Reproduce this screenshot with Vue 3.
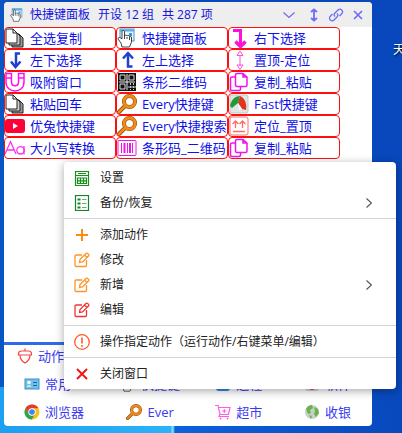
<template>
  <div class="desktop">
    <!-- Shared icon shapes -->
    <svg class="sprite" aria-hidden="true">
      <symbol id="i-hand" viewBox="0 0 20 20">
        <rect x="3" y="1" width="14" height="12" fill="#e8f4ff" stroke="#4a94c8" />
        <path d="M3 2.500h14" stroke="#58a9de" stroke-width="2" />
        <path d="M12 5h3v3h-3z" fill="#2c9cf0" />
        <path d="M13 9h2v2h-2z" fill="#f09a28" />
        <path d="M5 19l-1-4-3-4c0-2 2-2 4 0V4c0-2 2.500-2 2.500 0v4c1-1 2-1 2.500 0 1-1 2-.5 2.500.5 1-.5 2 0 2 1.500v4l-2 5z" fill="#fff" stroke="#111" stroke-width=".8" />
        <path d="M7.500 8v3M10 9v2M12.500 9v3" stroke="#111" stroke-width=".8" />
      </symbol>
      <symbol id="i-pages" viewBox="0 0 20 20">
        <path d="M7 6h7l4 4v9H7z" fill="#999" stroke="#222" />
        <path d="M4 4h7l4 4v9H4z" fill="#ccc" stroke="#222" />
        <path d="M1 1h7l4 4v10H1z" fill="#fff" stroke="#222" />
        <path d="M8 1v4h4" fill="none" stroke="#222" />
      </symbol>
      <symbol id="i-left-down" viewBox="0 0 20 20">
        <path d="M15 3.500h-4V16" fill="none" stroke="#1f3fd0" stroke-width="2.500" />
        <path d="M6 11.500l4.500 5.500 5-5.500" fill="none" stroke="#1f3fd0" stroke-width="2.500" />
      </symbol>
      <symbol id="i-left-up" viewBox="0 0 20 20">
        <path d="M15.500 16.500H11V4" fill="none" stroke="#1f3fd0" stroke-width="2.500" />
        <path d="M6 8.500L11 3l5 5.500" fill="none" stroke="#1f3fd0" stroke-width="2.500" />
      </symbol>
      <symbol id="i-right-down" viewBox="0 0 20 20">
        <path d="M4 2.500h7.500V16" fill="none" stroke="#ff10d8" stroke-width="3" />
        <path d="M6.500 13.500l5 5 5-5" fill="none" stroke="#ff10d8" stroke-width="3.500" />
      </symbol>
      <symbol id="i-updown" viewBox="0 0 20 20">
        <path d="M11 5v11M8 5.500L11 1l3 4.500zM8 15l3 4.500L14 15z" fill="#fff" stroke="#ff50dc" />
      </symbol>
      <symbol id="i-magnet" viewBox="0 0 20 20">
        <path d="M1 1.500h5.500V10c0 5 7 5 7 0V1.500H19V10c0 12-18 12-18 0zM1 6h5.500M13.500 6H19" fill="none" stroke="#ff10ee" stroke-width="1.500" />
      </symbol>
      <symbol id="i-qr" viewBox="0 0 20 20">
        <path d="M1 1h18v18H1z" fill="#111" />
        <path d="M3 3h5v5H3zM12 3h5v5h-5zM3 12h5v5H3z" fill="none" stroke="#ddd" />
        <path d="M10 2v16M2 10h16" stroke="#eee" />
        <path d="M13.500 11v7M16.500 11v7M11 15h8" stroke="#ccc" stroke-dasharray="2 1" />
      </symbol>
      <symbol id="i-copy" viewBox="0 0 20 20">
        <path d="M7 5H3q-1.500 0-1.500 1.500V17q0 1.500 1.500 1.500h7q1.500 0 1.500-1.500v-2M8 1.500h6L18 5v8q0 1.500-1.500 1.500H8q-1.500 0-1.500-1.500V3Q6.500 1.500 8 1.500zM14 1.500V5h4" fill="none" stroke="#f014e8" stroke-width="1.500" />
      </symbol>
      <symbol id="i-search" viewBox="0 0 20 20">
        <path d="M8 12l-6 6" stroke="#7a4208" stroke-width="4" stroke-linecap="round" />
        <circle cx="12.500" cy="7.500" r="5.500" fill="none" stroke="#8a4c0c" stroke-width="4" />
        <path d="M8 12l-6 6" stroke="#f58b16" stroke-width="2.500" stroke-linecap="round" />
        <circle cx="12.500" cy="7.500" r="5.500" fill="none" stroke="#f58b16" stroke-width="2.800" />
      </symbol>
      <symbol id="i-fast" viewBox="0 0 20 20">
        <rect x="1" y="1" width="18" height="18" rx="2" fill="#e2e5e2" stroke="#c4c8c4" />
        <path d="M1 12C2 6 6 2 11 2L9 9l-6 5z" fill="#1f9a3c" />
        <path d="M11 2c5 2 7 8 6 14l-4-1-4-6z" fill="#e0341c" />
        <path d="M9 9l4 6-3 1z" fill="#fff" />
      </symbol>
      <symbol id="i-youtube" viewBox="0 0 20 20">
        <rect y="3" width="20" height="14" rx="3" fill="#ff0038" />
        <path d="M8 7v6l5-3z" fill="#fff" />
      </symbol>
      <symbol id="i-top" viewBox="0 0 20 20">
        <rect x="1" y="1" width="18" height="18" rx="2" fill="#fff" stroke="#ff6a6a" />
        <path d="M6.500 12V5M3.500 8l3-3 3 3M13.500 12V5M10.500 8l3-3 3 3M4 15.500h12" fill="none" stroke="#ff6a6a" stroke-width="1.300" />
      </symbol>
      <symbol id="i-case" viewBox="0 0 20 20">
        <path d="M0 16L5.500 3.500 11 16M2 12h7M19 8v8.500" fill="none" stroke="#ff30ee" stroke-width="1.300" />
        <circle cx="15.500" cy="12.300" r="3.700" fill="none" stroke="#ff30ee" stroke-width="1.300" />
      </symbol>
      <symbol id="i-barcode" viewBox="0 0 20 20">
        <rect x="1" y="2.500" width="18" height="15" rx="1" fill="none" stroke="#f014e8" />
        <path d="M4.500 5v10M10.500 5v10M15.500 5v10" stroke="#f014e8" />
        <path d="M7.500 5v10M13 5v10" stroke="#f014e8" stroke-width="2" />
      </symbol>

      <symbol id="i-down" viewBox="0 0 16 16">
        <path d="M2.500 5.500L8 10.500l5.500-5" fill="none" stroke="#6c6cf8" stroke-width="1.200" />
      </symbol>
      <symbol id="i-resize" viewBox="0 0 16 16">
        <path d="M8 4v8M5 5l3-2.500L11 5M5 11l3 2.500 3-2.500" fill="none" stroke="#6c6cf8" stroke-width="1.800" />
      </symbol>
      <symbol id="i-link" viewBox="0 0 16 16">
        <path d="M7 9.500a2.500 2.500 0 0 1 0-3.500l3-3a2.600 2.600 0 0 1 3.700 3.700L11.500 9M9 6.500a2.500 2.500 0 0 1 0 3.500l-3 3a2.600 2.600 0 0 1-3.700-3.700L4.500 7" fill="none" stroke="#6c6cf8" stroke-width="1.300" />
      </symbol>
      <symbol id="i-close" viewBox="0 0 16 16">
        <path d="M4 4l8 8M12 4l-8 8" stroke="#6c6cf8" stroke-width="1.700" />
      </symbol>

      <symbol id="i-calc" viewBox="0 0 16 16">
        <path d="M1.500 1.500h13v14h-13zM1.500 5.500h13M3.500 8h9v5.500h-9zM3.500 10.800h9M6.500 8v5.500M9.500 8v5.500" fill="none" stroke="#169016" stroke-width="1.200" />
        <path d="M4 3.500h8" stroke="#169016" />
      </symbol>
      <symbol id="i-list" viewBox="0 0 16 16">
        <rect x="1.500" y=".5" width="13" height="15" fill="none" stroke="#12852a" stroke-width="1.200" />
        <path d="M3.500 4.500h3M3.500 8.500h3M3.500 12.500h3" stroke="#12852a" stroke-width="2" />
        <path d="M8 4.500h4.500M8 8.500h4.500M8 12.500h4.500" stroke="#6aae74" />
      </symbol>
      <symbol id="i-plus" viewBox="0 0 16 16">
        <path d="M8 2v12M2 8h12" stroke="#ff8a10" stroke-width="2" />
      </symbol>
      <symbol id="i-edit" viewBox="0 0 16 16">
        <path d="M8 3H2.200Q1 3 1 4.200v9.100q0 1.200 1.200 1.200h9.100q1.200 0 1.200-1.200V8M5.500 10.500l.5-3L12 1.500q.8-.8 1.600 0l.9.900q.8.800 0 1.600l-6 6zM10.500 3l2.500 2.500" fill="none" stroke="currentColor" stroke-width="1.300" />
      </symbol>
      <symbol id="i-alert" viewBox="0 0 16 16">
        <circle cx="8" cy="8" r="7.300" fill="none" stroke="#ff5a28" stroke-width="1.300" />
        <path d="M8 3.500v6M8 11v1.700" stroke="#ff5a28" stroke-width="1.600" />
      </symbol>
      <symbol id="i-cross" viewBox="0 0 16 16">
        <path d="M3 3l10 10M13 3L3 13" stroke="#f01414" stroke-width="1.900" />
      </symbol>

      <symbol id="i-acorn" viewBox="0 0 16 16">
        <path d="M1.500 6q0-3 3-3h7q3 0 3 3v1h-13zM3 7c0 4 2 6.500 5 8 3-1.500 5-4 5-8M8 3V.5" fill="none" stroke="#ff4040" stroke-width="1.200" />
      </symbol>
      <symbol id="i-card" viewBox="0 0 16 16">
        <rect x="1" y="3" width="14" height="10" fill="#6cc0ee" stroke="#3d92cc" />
        <circle cx="5" cy="6.500" r="1.800" fill="#fff" />
        <path d="M2.500 11q2.500-4 5 0z" fill="#f6e4b0" />
        <path d="M9 6.500h4M9 9.500h4" stroke="#235f98" />
      </symbol>
      <symbol id="i-chrome" viewBox="0 0 16 16">
        <circle cx="8" cy="8" r="7.500" fill="#fbc116" />
        <path d="M1.500 4.250a7.500 7.500 0 0 1 13 0H8L5 9.800z" fill="#e33b2e" />
        <path d="M1.500 4.250a7.500 7.500 0 0 0 6.300 11.250L11 10H5z" fill="#2da44e" />
        <circle cx="8" cy="8" r="3.700" fill="#fff" />
        <circle cx="8" cy="8" r="2.800" fill="#3f83ee" />
      </symbol>
      <symbol id="i-screen" viewBox="0 0 16 16">
        <rect x="1" y="1" width="14" height="14" rx="3" fill="#2d8ae8" />
        <path d="M4 11l8-6" stroke="#fff" stroke-width="2" />
      </symbol>
      <symbol id="i-cart" viewBox="0 0 16 16">
        <path d="M0 1.500h3l2 9h8.500L15 3.500H4M5 10.500l-1 2h10M9.300 5v4M7.300 7h4" fill="none" stroke="#ff5ce4" stroke-width="1.200" />
        <circle cx="5.500" cy="14.500" r="1" fill="#ff5ce4" />
        <circle cx="12.500" cy="14.500" r="1" fill="#ff5ce4" />
      </symbol>
      <symbol id="i-disk" viewBox="0 0 16 16">
        <rect x="1" y="2" width="14" height="13" rx="3" fill="#d2d6da" />
        <circle cx="8" cy="11" r="3" fill="#e04848" />
      </symbol>
      <symbol id="i-globe" viewBox="0 0 16 16">
        <circle cx="8" cy="8" r="7" fill="#c3d2c4" />
        <path d="M2 5q2-4 6-4l1 3-3 2 1 3-3 1zM10 3l4 2 1 4-3 4-2-3 1-3zM5 11l3 1-1 3z" fill="#6fb04e" />
      </symbol>
    </svg>

    <a class="shortcut" href="#">天</a>

    <main class="panel">
      <header class="titlebar">
        <svg class="icon-14"><use href="#i-hand" /></svg>
        <h1 class="title">
          <span>快捷键面板</span>
          <span>开设 12 组</span>
          <span>共 287 项</span>
        </h1>
        <button
          v-for="tool in tools"
          :key="tool.icon"
          type="button"
          class="tool"
          :aria-label="tool.label"
        >
          <svg class="icon-16"><use :href="'#i-' + tool.icon" /></svg>
        </button>
      </header>

      <section class="actions">
        <button
          v-for="(action, index) in actions"
          :key="index"
          type="button"
          class="action"
        >
          <svg class="icon-20"><use :href="'#i-' + action.icon" /></svg>
          <span>{{ action.name }}</span>
        </button>
      </section>

      <footer class="groups">
        <button type="button" class="group-title">
          <svg class="icon-16"><use href="#i-acorn" /></svg>
          <span>动作</span>
        </button>
        <div class="group-list">
          <button
            v-for="group in groups"
            :key="group.name"
            type="button"
            class="group"
          >
            <svg class="icon-16"><use :href="'#i-' + group.icon" /></svg>
            <span>{{ group.name }}</span>
          </button>
        </div>
      </footer>
    </main>

    <nav class="menu">
      <ul v-for="(section, index) in menu" :key="index" class="menu-section">
        <li v-for="item in section" :key="item.name">
          <button type="button" class="menu-item">
            <svg class="icon-16" :class="item.tone"><use :href="'#i-' + item.icon" /></svg>
            <span class="menu-name">{{ item.name }}</span>
            <svg v-if="item.children" class="arrow" viewBox="0 0 6 10">
              <path d="M.5 .5L5.500 5l-5 4.500" fill="none" stroke="#555" stroke-width="1.200" />
            </svg>
          </button>
        </li>
      </ul>
    </nav>
  </div>
</template>

<script setup>
import { ref } from "vue";

// Buttons in the title bar
const tools = [
  { icon: "down", label: "收起" },
  { icon: "resize", label: "高度" },
  { icon: "link", label: "链接" },
  { icon: "close", label: "关闭" },
];

// Actions, three per row
const actions = ref([
  { icon: "pages", name: "全选复制" },
  { icon: "hand", name: "快捷键面板" },
  { icon: "right-down", name: "右下选择" },
  { icon: "left-down", name: "左下选择" },
  { icon: "left-up", name: "左上选择" },
  { icon: "updown", name: "置顶-定位" },
  { icon: "magnet", name: "吸附窗口" },
  { icon: "qr", name: "条形二维码" },
  { icon: "copy", name: "复制_粘贴" },
  { icon: "pages", name: "粘贴回车" },
  { icon: "search", name: "Every快捷键" },
  { icon: "fast", name: "Fast快捷键" },
  { icon: "youtube", name: "优兔快捷键" },
  { icon: "search", name: "Every快捷搜索" },
  { icon: "top", name: "定位_置顶" },
  { icon: "case", name: "大小写转换" },
  { icon: "barcode", name: "条形码_二维码" },
  { icon: "copy", name: "复制_粘贴" },
]);

// Action groups at the bottom
const groups = ref([
  { icon: "card", name: "常用" },
  { icon: "hand", name: "快捷键" },
  { icon: "screen", name: "远程" },
  { icon: "disk", name: "软件" },
  { icon: "chrome", name: "浏览器" },
  { icon: "search", name: "Ever" },
  { icon: "cart", name: "超市" },
  { icon: "globe", name: "收银" },
]);

// Context menu, one array per section
const menu = [
  [
    { icon: "calc", name: "设置" },
    { icon: "list", name: "备份/恢复", children: true },
  ],
  [
    { icon: "plus", name: "添加动作" },
    { icon: "edit", name: "修改", tone: "orange" },
    { icon: "edit", name: "新增", tone: "orange", children: true },
    { icon: "edit", name: "编辑", tone: "red" },
  ],
  [{ icon: "alert", name: "操作指定动作（运行动作/右键菜单/编辑）" }],
  [{ icon: "cross", name: "关闭窗口" }],
];
</script>

<style>
body {
  background: #0848bc;
}
</style>

<style scoped>
.desktop {
  position: relative;
  display: flex;
  min-height: 100vh;
  box-sizing: border-box;
  padding: 2px 30px 7px 4px;
  overflow: hidden;
  background:
    linear-gradient(90deg, #1ba0f2 0, #2cb2f8 171px, #7fe4fb 172px, #7fe4fb 173px, #0a62dc 175px, #0848bc 100%) bottom / 100% 46px no-repeat,
    linear-gradient(90deg, #0a56c4 0, #0848bc 40px);
  font-family: "Open Sans", "Noto Sans CJK SC", sans-serif;
}
.sprite {
  position: absolute;
  width: 0;
  height: 0;
}
button {
  margin: 0;
  padding: 0;
  border: 0;
  background: none;
  color: inherit;
  font: inherit;
  text-align: left;
  white-space: nowrap;
}
svg {
  flex: none;
}
.icon-14 {
  width: 14px;
  height: 14px;
}
.icon-16 {
  width: 16px;
  height: 16px;
}
.icon-20 {
  width: 20px;
  height: 20px;
}

/* desktop label, cut by the screen edge */
.shortcut {
  position: absolute;
  top: 42px;
  left: calc(100% - 9px);
  color: #fff;
  font-size: 12px;
  line-height: 16px;
  text-decoration: none;
  text-shadow: 1px 1px 2px #000;
}

.panel {
  display: flex;
  flex: 1;
  flex-direction: column;
  min-width: 0;
  overflow: hidden;
  border-radius: 4px;
  background: #fff;
}
.titlebar {
  display: flex;
  align-items: center;
  height: 25px;
  padding: 0 3px 0 6px;
  background: #eee;
}
.title {
  display: flex;
  flex: 1;
  gap: 8px;
  margin: 0 0 0 6px;
  color: #1414e0;
  font-size: 12px;
  font-weight: 400;
  line-height: 16px;
  white-space: nowrap;
}
.tool {
  display: flex;
  justify-content: center;
  width: 22px;
}
.tool:first-of-type {
  width: 28px;
}

.actions {
  display: grid;
  flex: 1;
  grid-template-columns: repeat(3, 1fr);
  grid-auto-rows: 22px;
  align-content: start;
  padding-right: 32px;
}
.action {
  display: flex;
  align-items: center;
  gap: 5px;
  min-width: 0;
  overflow: hidden;
  border: 1px solid #ff1010;
  border-radius: 4px;
  color: #1010e8;
  font-size: 13px;
  line-height: 20px;
}

.groups {
  border-top: 3px solid #2f6be8;
  color: #3a3af2;
  font-size: 13px;
  line-height: 20px;
}
.group-title {
  display: flex;
  align-items: center;
  gap: 5px;
  height: 25px;
  padding: 0 0 3px 13px;
}
.group-list {
  display: grid;
  grid-template-columns: 102fr 89fr 89fr 89fr;
  grid-auto-rows: 28px;
}
.group {
  display: flex;
  align-items: center;
  justify-content: center;
  gap: 5px;
}
.group:nth-child(4n + 1) {
  justify-content: flex-start;
  padding-left: 20px;
}

.menu {
  position: absolute;
  top: 162px;
  right: 6px;
  left: 64px;
  padding: 3px 0;
  border-radius: 4px;
  background: #fff;
  box-shadow: 0 2px 10px rgba(0, 0, 0, 0.35);
  color: #222;
  font-size: 12px;
  line-height: 16px;
}
.menu-section {
  margin: 0;
  padding: 0;
  list-style: none;
}
.menu-section + .menu-section {
  margin-top: 3px;
  padding-top: 3px;
  border-top: 1px solid #d4d4d4;
}
.menu-item {
  display: flex;
  align-items: center;
  gap: 10px;
  width: 100%;
  height: 25px;
  padding: 0 24px 0 10px;
}
.menu-name {
  flex: 1;
}
.arrow {
  width: 6px;
  height: 10px;
}
.orange {
  color: #ff9420;
}
.red {
  color: #f03434;
}
</style>
